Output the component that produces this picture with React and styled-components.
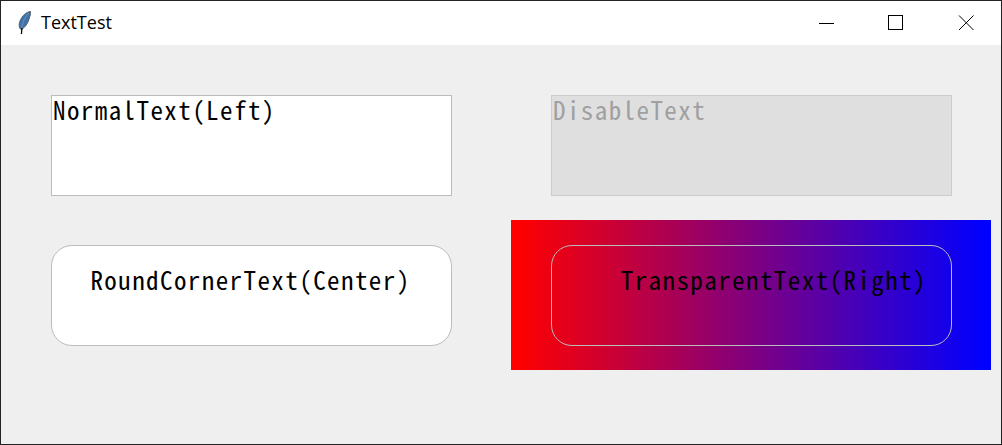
import React from "react";
import styled, { createGlobalStyle } from "styled-components";

const GlobalStyle = createGlobalStyle`
  * { box-sizing: border-box; }
  body { margin: 0; background: #efefef; }
`;

const Window = styled.main`
  display: flex;
  flex-direction: column;
  width: 1002px;
  height: 445px;
  border: 1px solid #232323;
  background: #efefef;
  overflow: hidden;
`;

const TitleBar = styled.header`
  display: flex;
  align-items: center;
  flex: 0 0 44px;
  padding-left: 15px;
  background: #fff;
`;

const Title = styled.h1`
  margin: 0 auto 0 8px;
  padding-bottom: 2px;
  font: 400 18px/24px "Open Sans", "Noto Sans", sans-serif;
  letter-spacing: 0;
  color: #000;
`;

const WindowButton = styled.button`
  display: flex;
  align-items: center;
  justify-content: center;
  width: 70px;
  height: 44px;
  padding: 0;
  border: 0;
  background: none;
`;

const Content = styled.div`
  display: grid;
  grid-template-columns: 480px 480px;
  grid-template-rows: 150px 150px;
  column-gap: 20px;
  padding: 25px 10px 0;
`;

const Cell = styled.section`
  padding: 25px 40px;
  background: ${(p) => (p.$gradient ? "linear-gradient(90deg, #f00 1%, #00f 99%)" : "none")};
`;

const tones = {
  normal: { bg: "#fff", border: "#bcbcbc", text: "#000" },
  disabled: { bg: "#dfdfdf", border: "#cccccc", text: "#a0a0a0" },
  transparent: { bg: "transparent", border: "#bcbcbc", text: "#000" },
};

const TextBox = styled.div`
  width: 401px;
  height: 101px;
  padding: ${(p) => (p.$round ? "20px 24px 20px 22px" : "0 1px")};
  border: 1px solid ${(p) => tones[p.$tone].border};
  border-radius: ${(p) => (p.$round ? "21px" : "0")};
  background: ${(p) => tones[p.$tone].bg};
  color: ${(p) => tones[p.$tone].text};
  text-align: ${(p) => p.$align};
  font: 400 25px/26px "Noto Sans CJK SC", sans-serif;
  font-feature-settings: "hwid";
  letter-spacing: 1.42px;
  white-space: nowrap;
`;

const Feather = () => (
  <svg width="17" height="26" viewBox="0 0 17 26">
    <path d="M14.5 1.5C10 2 6 6 4 11C2.5 15 3 18 5 19.5C9 18 12 13 13 9C14 6 14.7 4 14.5 1.5Z" fill="#3f72ab" stroke="#55606b" strokeWidth="1" />
    <path d="M12.8 3C9 7 6.5 12 5.8 18" fill="none" stroke="#7799bb" strokeWidth=".8" />
    <path d="M6 18L5.4 24" stroke="#000" strokeWidth="1.3" />
  </svg>
);

export default function App() {
  return (
    <>
      <GlobalStyle />
      <Window>
        <TitleBar>
          <Feather />
          <Title>TextTest</Title>
          <WindowButton aria-label="Minimize">
            <svg width="16" height="16" shapeRendering="crispEdges"><path d="M1 8.5H16" stroke="#000" /></svg>
          </WindowButton>
          <WindowButton aria-label="Maximize">
            <svg width="16" height="16" shapeRendering="crispEdges"><path d="M.5 .5H14.5V14.5H.5Z" fill="none" stroke="#000" /></svg>
          </WindowButton>
          <WindowButton aria-label="Close">
            <svg width="16" height="16"><path d="M1 .5L15.5 15M15.5 .5L1 15" stroke="#000" strokeWidth="1" /></svg>
          </WindowButton>
        </TitleBar>
        <Content>
          <Cell><TextBox $tone="normal" $align="left">NormalText(Left)</TextBox></Cell>
          <Cell><TextBox $tone="disabled" $align="left">DisableText</TextBox></Cell>
          <Cell><TextBox $tone="normal" $align="center" $round>RoundCornerText(Center)</TextBox></Cell>
          <Cell $gradient><TextBox $tone="transparent" $align="right" $round>TransparentText(Right)</TextBox></Cell>
        </Content>
      </Window>
    </>
  );
}
